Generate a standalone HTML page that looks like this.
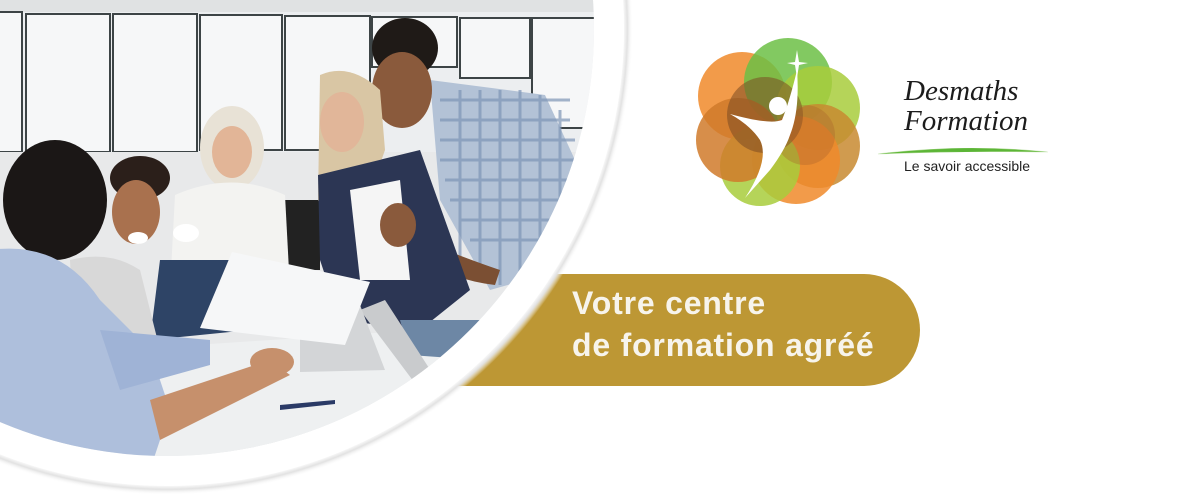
<!DOCTYPE html>
<html><head><meta charset="utf-8"><style>
html,body{margin:0;padding:0;background:#fff;width:1200px;height:500px;overflow:hidden}
svg{display:block}
</style></head><body>
<svg width="1200" height="500" viewBox="0 0 1200 500" xmlns="http://www.w3.org/2000/svg">
<defs>
<clipPath id="c"><circle cx="167" cy="29" r="427"/></clipPath>
<radialGradient id="sh" cx="167" cy="29" r="466" gradientUnits="userSpaceOnUse">
<stop offset="0.978" stop-color="#ffffff"/><stop offset="0.988" stop-color="#e2e2e2"/><stop offset="1" stop-color="#ffffff" stop-opacity="0"/>
</radialGradient>
<linearGradient id="ln" x1="0" x2="1"><stop offset="0" stop-color="#7cc04a" stop-opacity="0.2"/><stop offset="0.5" stop-color="#5bb536"/><stop offset="1" stop-color="#7cc04a" stop-opacity="0.2"/></linearGradient>
</defs>
<path d="M385 274 H864 A56 56 0 0 1 864 386 H385 Z" fill="#bd9734"/>
<circle cx="167" cy="29" r="466" fill="url(#sh)"/>
<circle cx="167" cy="29" r="457" fill="#fff"/>
<g clip-path="url(#c)">
<rect x="0" y="0" width="600" height="500" fill="#eceef0"/>
<rect x="0" y="0" width="600" height="12" fill="#e0e2e3"/>
<g fill="#f6f7f8" stroke="#3d4446" stroke-width="2">
<rect x="-5" y="12" width="27" height="140"/><rect x="26" y="14" width="84" height="138"/>
<rect x="113" y="14" width="84" height="138"/><rect x="200" y="15" width="82" height="135"/>
<rect x="285" y="16" width="85" height="134"/><rect x="372" y="17" width="85" height="50"/>
<rect x="460" y="18" width="70" height="60"/><rect x="532" y="18" width="70" height="110"/>
</g>
<rect x="0" y="152" width="600" height="300" fill="#e8e9ea"/>
<rect x="280" y="200" width="40" height="70" fill="#222"/>
<path d="M120 350 L420 330 L600 380 L600 500 L120 500 Z" fill="#eef0f1"/>
<ellipse cx="232" cy="148" rx="32" ry="42" fill="#e8e2d6"/>
<ellipse cx="232" cy="152" rx="20" ry="26" fill="#e2b597"/>
<path d="M175 195 Q232 170 285 195 L290 290 L170 290 Z" fill="#f3f3f1"/>
<path d="M160 260 L240 260 L250 330 L150 340 Z" fill="#2e4466"/>
<ellipse cx="186" cy="233" rx="13" ry="9" fill="#fff"/>
<path d="M430 80 L545 95 L575 160 L560 270 L490 290 L440 200 Z" fill="#b3c2d6"/>
<g stroke="#7e95b6" stroke-width="3" opacity="0.7">
<path d="M440 100 L570 100 M440 120 L570 120 M440 140 L575 140 M440 160 L575 160 M445 180 L570 180 M450 200 L565 200 M460 220 L560 220 M470 240 L555 240"/>
<path d="M460 90 L460 260 M480 90 L480 280 M500 90 L500 285 M520 90 L520 285 M540 95 L540 280 M560 110 L560 270"/>
</g>
<ellipse cx="405" cy="48" rx="33" ry="30" fill="#1f1a17"/>
<ellipse cx="402" cy="90" rx="30" ry="38" fill="#8a5a3c"/>
<path d="M420 240 Q470 260 500 270 L495 285 Q450 280 400 250 Z" fill="#7b4f33"/>
<path d="M320 75 Q350 62 380 90 L385 150 L350 250 L318 200 Z" fill="#d9c6a4"/>
<ellipse cx="342" cy="122" rx="22" ry="30" fill="#e1b699"/>
<path d="M318 175 L420 150 L470 290 L420 330 L340 320 L320 260 Z" fill="#2c3654"/>
<path d="M350 190 L400 180 L410 280 L360 280 Z" fill="#f5f5f5"/>
<ellipse cx="398" cy="225" rx="18" ry="22" fill="#8a5a3c"/>
<path d="M400 320 L480 320 L480 360 L410 355 Z" fill="#6d87a5"/>
<path d="M360 310 L420 390 L440 385 L385 300 Z" fill="#c9cbcd"/>
<path d="M300 330 L360 305 L385 370 L300 372 Z" fill="#d3d5d7"/>
<ellipse cx="140" cy="178" rx="30" ry="22" fill="#2b1f1a"/>
<ellipse cx="136" cy="212" rx="24" ry="32" fill="#a9714e"/>
<ellipse cx="138" cy="238" rx="10" ry="6" fill="#fff"/>
<path d="M70 260 Q110 250 140 270 L160 350 L75 360 Z" fill="#d8d8d8"/>
<path d="M232 252 L370 282 L345 345 L200 328 Z" fill="#f6f7f8"/>
<ellipse cx="55" cy="200" rx="52" ry="60" fill="#1b1716"/>
<path d="M-10 250 Q60 240 100 300 L150 350 L170 410 L150 470 L-10 470 Z" fill="#aebfdc"/>
<path d="M100 330 L210 340 L210 365 L120 390 Z" fill="#9fb3d6"/>
<path d="M150 400 L270 360 L290 375 L160 440 Z" fill="#c6906c"/>
<ellipse cx="272" cy="362" rx="22" ry="14" fill="#c6906c"/>
<path d="M280 405 L335 400 L335 404 L280 410 Z" fill="#2a3a66"/>
</g>
<g>
<circle cx="742" cy="96" r="44" fill="#f08a2a" fill-opacity="0.85"/>
<circle cx="788" cy="82" r="44" fill="#6cbf45" fill-opacity="0.85"/>
<circle cx="818" cy="108" r="42" fill="#a8cc3c" fill-opacity="0.85"/>
<circle cx="818" cy="146" r="42" fill="#c88a30" fill-opacity="0.85"/>
<circle cx="796" cy="160" r="44" fill="#f08a2a" fill-opacity="0.85"/>
<circle cx="760" cy="166" r="40" fill="#a8cc3c" fill-opacity="0.85"/>
<circle cx="738" cy="140" r="42" fill="#d07a2a" fill-opacity="0.85"/>
<circle cx="765" cy="115" r="38" fill="#7a4a22" fill-opacity="0.55"/>
<circle cx="805" cy="135" r="30" fill="#a8602a" fill-opacity="0.35"/>
</g>
<path d="M797 50 L799 62 L808 63 L799 65 L797 78 L795 65 L787 63 L795 62 Z" fill="#fff"/>
<circle cx="778" cy="106" r="9" fill="#fff"/>
<path d="M730 114 Q770 125 782 120 Q790 100 797 70 Q800 110 790 135 Q785 150 770 170 L745 198 Q770 160 760 140 Q750 125 730 114 Z" fill="#fff"/>
<text x="904" y="100" font-family="Liberation Serif, serif" font-style="italic" font-size="29" fill="#1c1c1c">Desmaths</text>
<text x="904" y="130" font-family="Liberation Serif, serif" font-style="italic" font-size="29" fill="#1c1c1c">Formation</text>
<path d="M878 154 Q963 144 1048 152 Q963 150 878 154 Z" fill="#5bb536" stroke="url(#ln)" stroke-width="1"/>
<text x="904" y="171" font-family="Liberation Sans, sans-serif" font-size="14" fill="#222">Le savoir accessible</text>
<text font-family="Liberation Sans, sans-serif" font-weight="bold" font-size="32" letter-spacing="0.8" fill="#f7f4ec">
<tspan x="572" y="314">Votre centre</tspan>
<tspan x="572" y="356">de formation agréé</tspan>
</text>
</svg>
</body></html>
